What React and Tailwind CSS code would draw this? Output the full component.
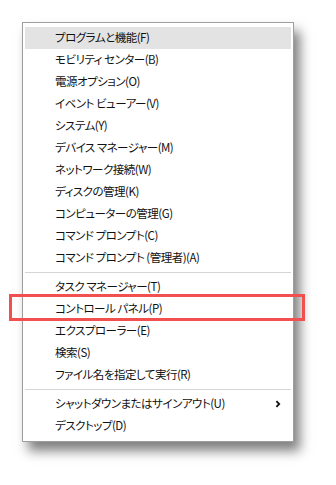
import React from "react";

const group1 = [
  "プログラムと機能(F)",
  "モビリティ センター(B)",
  "電源オプション(O)",
  "イベント ビューアー(V)",
  "システム(Y)",
  "デバイス マネージャー(M)",
  "ネットワーク接続(W)",
  "ディスクの管理(K)",
  "コンピューターの管理(G)",
  "コマンド プロンプト(C)",
  "コマンド プロンプト (管理者)(A)",
];
const group2 = [
  "タスク マネージャー(T)",
  "コントロール パネル(P)",
  "エクスプローラー(E)",
  "検索(S)",
  "ファイル名を指定して実行(R)",
];

function Row({ label, active, highlight, arrow }) {
  return (
    <div
      className={
        "relative flex h-[22px] items-center justify-between pl-[30px] pr-[10px] " +
        (active ? "bg-[#e3e3e3]" : "")
      }
    >
      <span className="whitespace-nowrap">{label}</span>
      {arrow && (
        <svg width="6" height="8" viewBox="0 0 6 8" className="text-[#111]">
          <path d="M1.4 1.2 L4.2 4 L1.4 6.8" fill="none" stroke="currentColor" strokeWidth="1.8" />
        </svg>
      )}
      {highlight && (
        <div className="pointer-events-none absolute left-[-16px] top-[-4px] h-[27px] w-[296px] border-[3px] border-[#f24f4f]" />
      )}
    </div>
  );
}

function Sep({ mt, mb }) {
  return <div className={"h-px bg-[#d4d4d4] " + mt + " " + mb} />;
}

export default function App() {
  return (
    <div className="h-[485px] w-[336px] bg-white pl-[22px] pt-[22px]">
      <div
        className="w-[272px] border border-[#9e9e9e] bg-white px-[2px] pb-[4px] pt-[4px] text-[11.5px] leading-none tracking-[-0.5px] text-[#111] shadow-[6px_9px_11px_rgba(0,0,0,0.5)] [font-family:'Noto_Sans_CJK_JP','Noto_Sans',sans-serif] [font-feature-settings:'palt']"
      >
        {group1.map((l, i) => (
          <Row key={l} label={l} active={i === 0} />
        ))}
        <Sep mt="mt-[3px]" mb="mb-[3px]" />
        {group2.map((l) => (
          <Row key={l} label={l} highlight={l.startsWith("コントロール")} />
        ))}
        <Sep mt="mt-[3px]" mb="mb-[3px]" />
        <Row label="シャットダウンまたはサインアウト(U)" arrow />
        <Row label="デスクトップ(D)" />
      </div>
    </div>
  );
}
